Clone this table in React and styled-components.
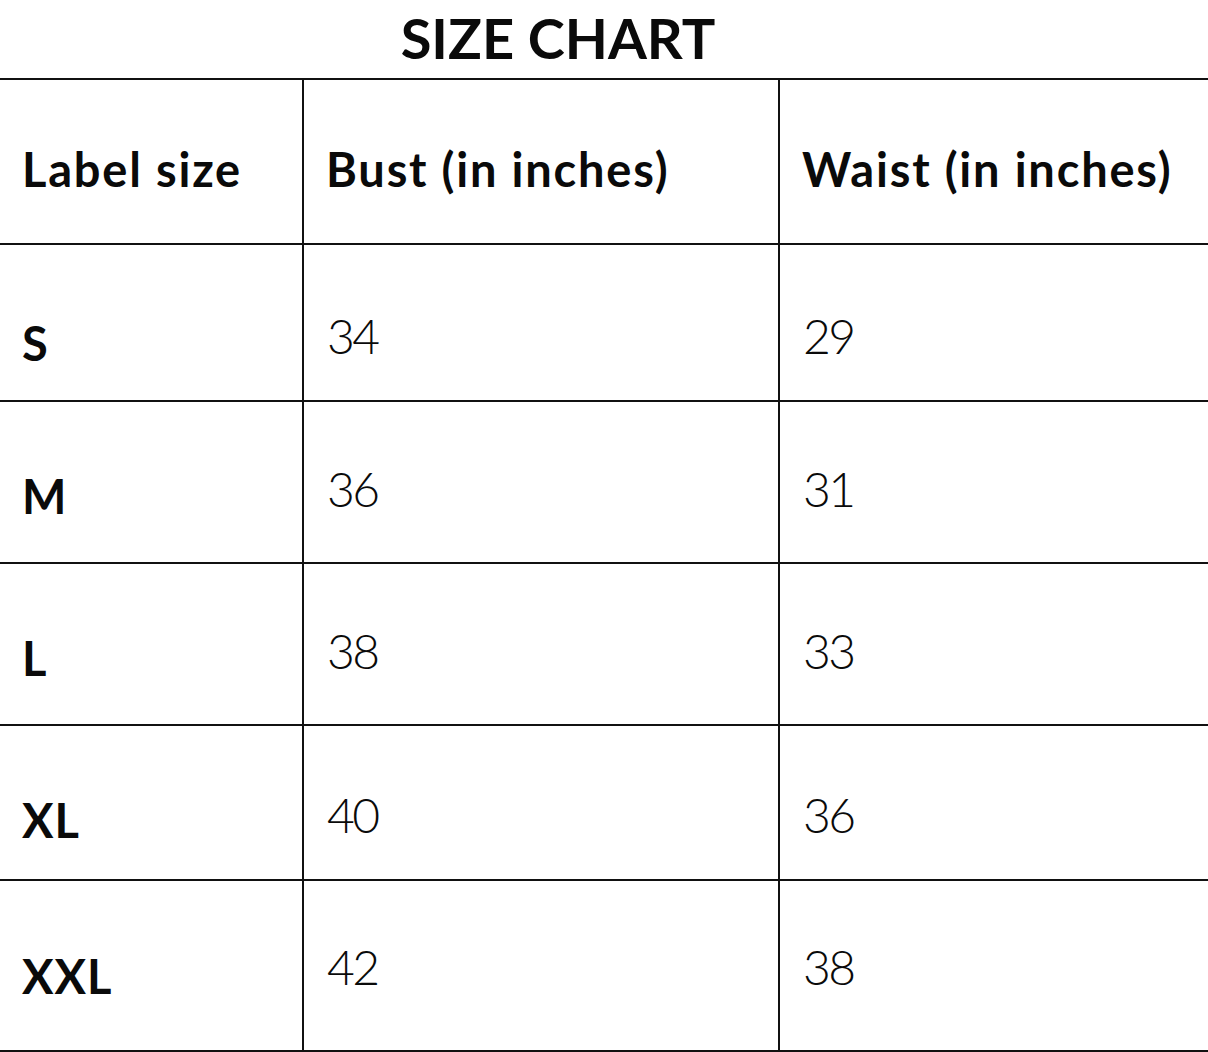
import React from 'react'
import styled, { createGlobalStyle } from 'styled-components';

const GlobalStyle = createGlobalStyle`
  body {
    margin: 0;
    background: #fff;
    font-family: Lato, "Open Sans", sans-serif;
    color: #0a0a0a;
  }
`

const rows = [
  { label: 'S', bust: '34', waist: '29', h: 157, lo: 21, vo: 13 },
  { label: 'M', bust: '36', waist: '31', h: 162, lo: 14, vo: 7 },
  { label: 'L', bust: '38', waist: '33', h: 162, lo: 14, vo: 7 },
  { label: 'XL', bust: '40', waist: '36', h: 155, lo: 18, vo: 12 },
  { label: 'XXL', bust: '42', waist: '38', h: 171, lo: 11, vo: 1 },
]

function App() {
  return (
    <Page>
      <GlobalStyle />
      <Title>SIZE CHART</Title>
      <Table>
        <Row $h={165}>
          <HeadCell>Label size</HeadCell>
          <HeadCell>Bust (in inches)</HeadCell>
          <HeadCell>Waist (in inches)</HeadCell>
        </Row>
        {rows.map((r) => (
          <Row key={r.label} $h={r.h}>
            <LabelCell $shift={r.lo}>{r.label}</LabelCell>
            <ValueCell $shift={r.vo}>{r.bust}</ValueCell>
            <ValueCell $shift={r.vo}>{r.waist}</ValueCell>
          </Row>
        ))}
      </Table>
    </Page>
  )
}

export default App

const Page = styled.div`
  width: 1208px;
  height: 1052px;
  overflow: hidden;
`

const Title = styled.h1`
  margin: 0;
  height: 78px;
  display: flex;
  align-items: center;
  justify-content: center;
  padding-right: 92px;
  padding-bottom: 2px;
  box-sizing: border-box;
  font-size: 56px;
  font-weight: 700;
  letter-spacing: 0;
  line-height: 1;
`

const Table = styled.div`
  border-top: 2px solid #111;
`

const Row = styled.div`
  display: grid;
  grid-template-columns: 304px 476px 1fr;
  height: ${(p) => p.$h}px;
  box-sizing: border-box;
  border-bottom: 2px solid #111;
`

const Cell = styled.div`
  display: flex;
  align-items: center;
  padding-left: 22px;
  box-sizing: border-box;
  line-height: 1;
  &:not(:last-child) {
    border-right: 2px solid #111;
  }
`

const HeadCell = styled(Cell)`
  padding-top: 16px;
  font-size: 47px;
  font-weight: 700;
  letter-spacing: 1.8px;
`

const LabelCell = styled(Cell)`
  padding-top: ${(p) => p.$shift * 2}px;
  font-size: 47px;
  font-weight: 700;
  letter-spacing: 1px;
`

const ValueCell = styled(Cell)`
  padding-top: ${(p) => p.$shift * 2}px;
  padding-left: 23px;
  font-size: 48px;
  font-weight: 300;
  letter-spacing: -2.5px;
`
